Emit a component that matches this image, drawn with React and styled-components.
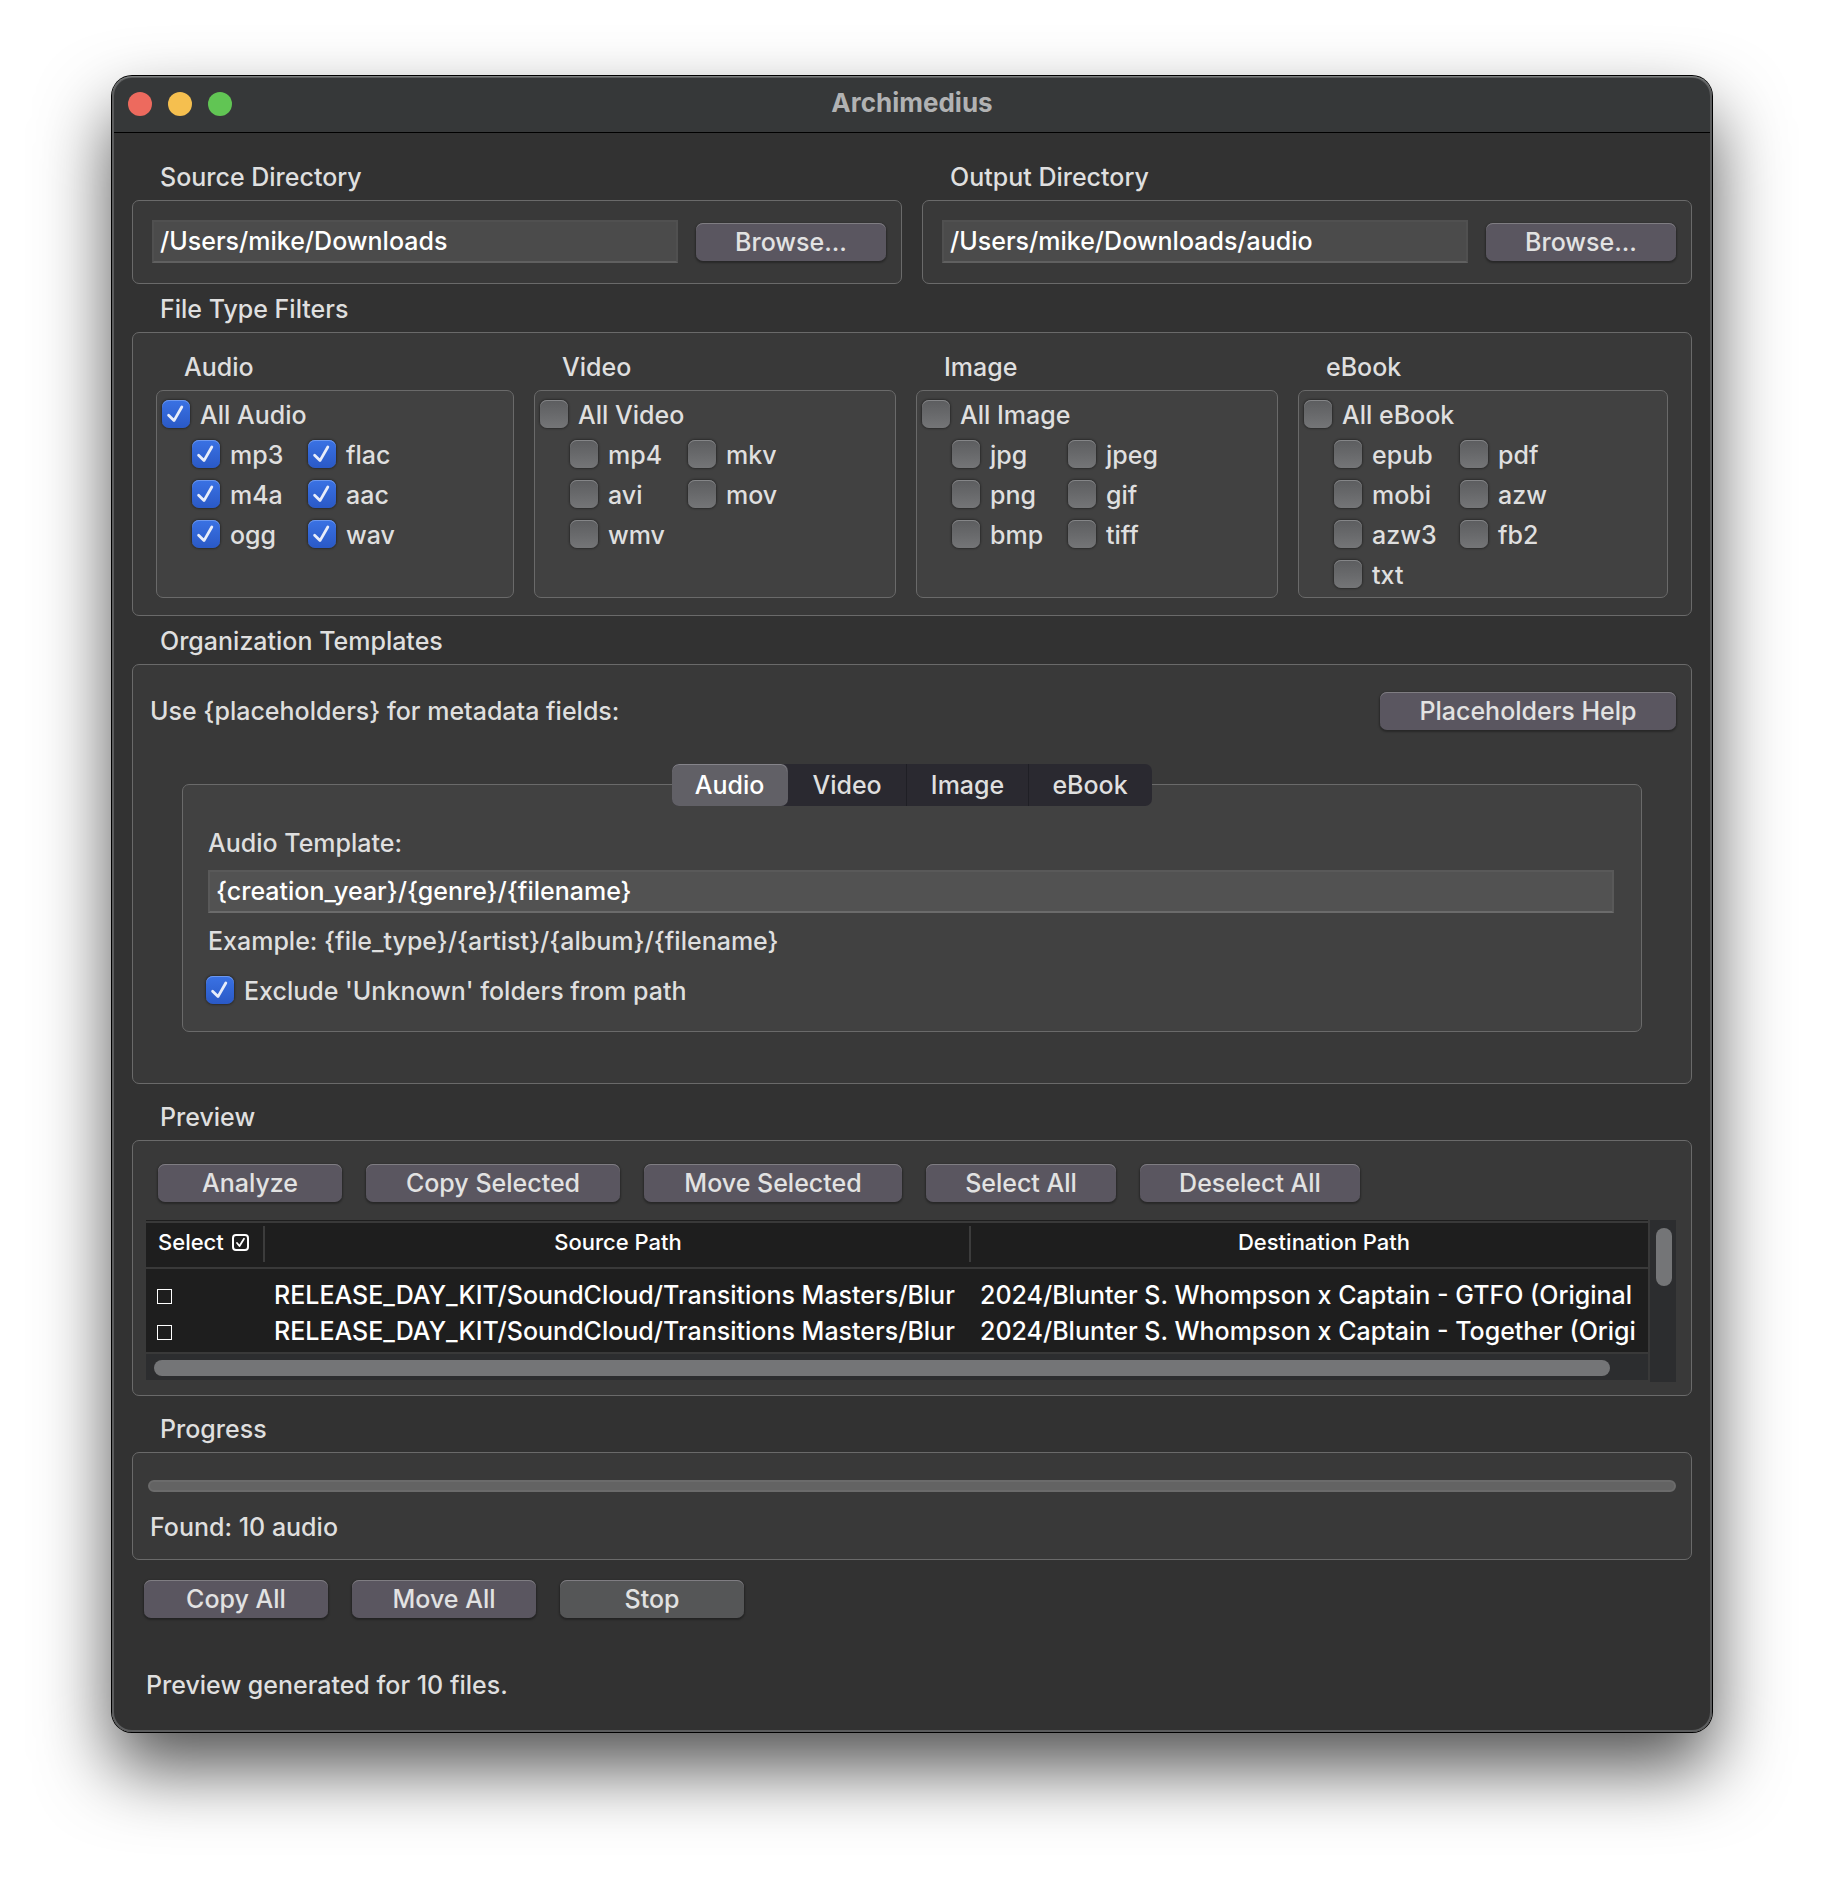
import React, { useId, useState } from "react";
import styled, { createGlobalStyle } from "styled-components";

const GlobalStyle = createGlobalStyle`
  *, *::before, *::after { box-sizing: border-box; }
  body {
    margin: 0;
    background: #ffffff;
    color: #dfdfdf;
    font-family: Inter, "Liberation Sans", sans-serif;
    font-size: 25px;
    font-weight: 500;
    line-height: 30px;
  }
  h1, h2, h3, p { margin: 0; font-size: inherit; font-weight: inherit; }
  button, input { font: inherit; color: inherit; margin: 0; }
`;

const Page = styled.div`
  padding: 76px 112px 148px;
`;

const Window = styled.main`
  position: relative;
  border-radius: 20px;
  background: #323232;
  overflow: clip;
`;

const WindowShadow = styled.div`
  border-radius: 20px;
  box-shadow: 0 0 0 1px #000, 0 36px 72px rgba(0, 0, 0, 0.68);
`;

const WindowEdge = styled.div`
  position: absolute;
  inset: 0;
  border-radius: 20px;
  pointer-events: none;
  box-shadow: inset 0 1px 0 #7d8080, inset 0 0 0 2px #5c5d5e;
`;

const TitleBar = styled.header`
  display: grid;
  grid-template-columns: 1fr auto 1fr;
  align-items: center;
  height: 57px;
  padding: 0 16px;
  background: #363839;
  border-bottom: 1px solid #000;
`;

const Lights = styled.div`
  display: flex;
  gap: 16px;
`;

const Light = styled.button`
  width: 24px;
  height: 24px;
  padding: 0;
  border: 0;
  border-radius: 50%;
  background: ${(p) => p.$color};
`;

const Title = styled.h1`
  padding-bottom: 2px;
  color: #b1b2b3;
  font-size: 26px;
  font-weight: 700;
`;

const Body = styled.div`
  padding: 19px 20px 32px;
`;

const Columns = styled.div`
  display: grid;
  grid-template-columns: 1fr 1fr;
  gap: 20px;
`;

const Section = styled.section`
  min-width: 0;
  margin-top: ${(p) => (p.$spaced ? 8 : 0)}px;
`;

const GroupTitle = styled.h2`
  padding: 2px 28px 0;
  line-height: 46px;
`;

const DirectoryLabel = styled.label`
  display: block;
`;

const Group = styled.div`
  border: 1px solid #6a6a6a;
  border-radius: 7px;
  background: ${(p) => (p.$inner ? "#414141" : "#393939")};
  padding: ${(p) => p.$pad};
`;

const PathRow = styled.div`
  display: flex;
  align-items: center;
  gap: 18px;
`;

const TextField = styled.input`
  display: block;
  flex: 1;
  width: 100%;
  min-width: 0;
  height: 43px;
  padding: 0 6px 2px;
  border: 2px solid ${(p) => (p.$light ? "#595959" : "#505050")};
  border-bottom-color: ${(p) => (p.$light ? "#6b6b6b" : "#606060")};
  border-radius: 0;
  outline: 0;
  background: ${(p) => (p.$light ? "#525252" : "#4b4b4b")};
  color: #fff;
`;

const Button = styled.button`
  flex: none;
  width: ${(p) => p.$width}px;
  height: 38px;
  padding: 0;
  border: 0;
  border-radius: 7px;
  background: ${(p) => (p.$muted ? "#555657" : "#5a5660")};
  box-shadow: inset 0 1px 0 #7f7d82, 0 1px 2px 1px rgba(0, 0, 0, 0.3);
  color: #e2e2e2;
  line-height: 38px;
  white-space: nowrap;
`;

const FilterGrid = styled.div`
  display: grid;
  grid-template-columns: 358fr 362fr 362fr 370fr;
  gap: 20px;
`;

const FilterColumn = styled.section`
  display: flex;
  flex-direction: column;
  min-width: 0;

  & > ${Group} { flex: 1; }
`;

const TypeGrid = styled.div`
  display: grid;
  grid-template-columns: ${(p) => p.$first}px auto;
  justify-content: start;
  gap: 12px 0;
  margin-top: 12px;
  padding-left: 30px;
`;

const CheckLabel = styled.label`
  display: flex;
  align-items: center;
  gap: 10px;
  height: 28px;
  white-space: nowrap;
`;

const CheckText = styled.span`
  padding-top: 2px;
`;

const Tick = styled.span`
  position: relative;
  display: block;
  flex: none;
  width: 28px;
  height: 28px;

  svg {
    position: absolute;
    inset: 0;
    pointer-events: none;
  }
`;

const TickInput = styled.input`
  display: block;
  appearance: none;
  width: 28px;
  height: 28px;
  border-radius: 7px;
  background: linear-gradient(#5c5d5f, #747577);
  box-shadow: inset 0 1px 0 #858688, 0 0 2px 1px rgba(0, 0, 0, 0.35);

  &:checked {
    background: linear-gradient(#3a72e4, #2a59c6);
    box-shadow: inset 0 1px 0 #6c97ee, 0 0 2px 1px rgba(0, 0, 0, 0.35);
  }
`;

const HelpRow = styled.div`
  display: flex;
  align-items: center;
  justify-content: space-between;
`;

const TabArea = styled.div`
  margin: 34px 34px 0 32px;
`;

const Tabs = styled.div`
  position: relative;
  display: flex;
  width: 480px;
  height: 42px;
  margin: 0 auto;
  border-radius: 7px;
  background: #2a2930;
`;

const Tab = styled.button`
  flex: ${(p) => p.$grow};
  padding: 0;
  border: 0;
  border-right: 1px solid ${(p) => (p.$divider ? "#1f1f25" : "transparent")};
  border-radius: ${(p) => (p.$active ? "7px" : "0")};
  background: ${(p) => (p.$active ? "#616066" : "transparent")};
  box-shadow: ${(p) => (p.$active ? "inset 0 1px 0 #85848a" : "none")};
  color: ${(p) => (p.$active ? "#fff" : "#dfdfdf")};
`;

const TabPanel = styled(Group)`
  margin-top: -22px;
`;

const FieldLabel = styled.label`
  display: block;
  margin-bottom: 12px;
`;

const Example = styled.p`
  margin: 13px 0 20px;
`;

const Inset = styled.div`
  margin-left: -2px;
`;

const Toolbar = styled.div`
  display: flex;
  flex-wrap: wrap;
  gap: 24px;
  padding-left: 12px;
`;

const TableFrame = styled.div`
  display: grid;
  grid-template-columns: minmax(0, 1fr) 26px;
  grid-template-rows: auto 28px;
  column-gap: 2px;
  margin-top: 18px;
`;

const TableView = styled.div`
  overflow: hidden;
  padding-bottom: 3px;
  border-bottom: 2px solid #393939;
  background: #1e1e1e;
`;

const Table = styled.table`
  width: calc(100% + 29px);
  table-layout: fixed;
  border-collapse: separate;
  border-spacing: 0;
  border-top: 1px solid #1e1e1e;
  color: #fff;

  tbody::before {
    content: "";
    display: table-row;
    height: 8px;
  }
`;

const HeadCell = styled.th`
  width: ${(p) => (p.$narrow ? "119px" : "auto")};
  height: 48px;
  padding: 0 ${(p) => (p.$narrow ? "0 6px 12px" : "6px 6px")};
  border-top: 2px solid #393939;
  border-bottom: 2px solid #393939;
  background: linear-gradient(#3c3c3c, #3c3c3c) right 3px / 2px 36px no-repeat;
  font-size: 22px;
  font-weight: 500;
  line-height: 26px;
`;

const SelectHead = styled.label`
  display: flex;
  align-items: center;
  gap: 8px;
`;

const Cell = styled.td`
  height: 36px;
  padding: 0 7px 0 ${(p) => (p.$tick ? 11 : 9)}px;
  line-height: 36px;
`;

const Clip = styled.div`
  overflow: hidden;
  white-space: nowrap;
`;

const MiniTick = styled.span`
  position: relative;
  display: block;
  width: ${(p) => p.$size}px;
  height: ${(p) => p.$size}px;

  input {
    display: block;
    appearance: none;
    width: 100%;
    height: 100%;
    border: ${(p) => p.$stroke}px solid #fff;
    border-radius: ${(p) => p.$radius}px;
  }

  svg {
    position: absolute;
    inset: 0;
    pointer-events: none;
  }
`;

const RowTick = styled.div`
  display: flex;
  align-items: center;
  height: 36px;
  padding-top: 3px;
`;

const HScroll = styled.div`
  height: 26px;
  padding: 6px 38px 4px 8px;
  background: #2c2d2f;
`;

const VScroll = styled.div`
  grid-column: 2;
  grid-row: 1 / span 2;
  padding: 8px 4px 0 6px;
  background: #2c2d2f;
`;

const Thumb = styled.div`
  height: ${(p) => p.$height}px;
  border-radius: 8px;
  background: #747577;
`;

const ProgressBar = styled.progress`
  display: block;
  width: 100%;
  height: 12px;
  appearance: none;
  border: 0;

  &::-webkit-progress-bar {
    border: 2px solid #6b6b6b;
    border-radius: 6px;
    background: #636363;
  }
  &::-webkit-progress-value {
    background: #3a72e4;
  }
`;

const ProgressText = styled.p`
  margin-top: 20px;
  padding-left: 2px;
`;

const Actions = styled.div`
  display: flex;
  gap: 24px;
  margin-top: 20px;
  padding-left: 12px;
`;

const Status = styled.p`
  margin-top: 52px;
  padding-left: 14px;
`;

const FILTERS = [
  { name: "Audio", on: true, first: 116, types: ["mp3", "flac", "m4a", "aac", "ogg", "wav"] },
  { name: "Video", on: false, first: 118, types: ["mp4", "mkv", "avi", "mov", "wmv"] },
  { name: "Image", on: false, first: 116, types: ["jpg", "jpeg", "png", "gif", "bmp", "tiff"] },
  { name: "eBook", on: false, first: 126, types: ["epub", "pdf", "mobi", "azw", "azw3", "fb2", "txt"] },
];

const TABS = [
  { name: "Audio", grow: 116 },
  { name: "Video", grow: 119 },
  { name: "Image", grow: 122 },
  { name: "eBook", grow: 123 },
];

const ROWS = [
  {
    source: "RELEASE_DAY_KIT/SoundCloud/Transitions Masters/Blur",
    dest: "2024/Blunter S. Whompson x Captain - GTFO (Original",
  },
  {
    source: "RELEASE_DAY_KIT/SoundCloud/Transitions Masters/Blur",
    dest: "2024/Blunter S. Whompson x Captain - Together (Origi",
  },
];

function Check({ label, initial }) {
  const [on, setOn] = useState(initial);
  return (
    <CheckLabel>
      <Tick>
        <TickInput type="checkbox" checked={on} onChange={() => setOn(!on)} />
        {on && (
          <svg width="28" height="28" viewBox="0 0 28 28" fill="none" aria-hidden="true">
            <path d="M6.6 15.2 L12 20.6 L19.8 7" stroke="#e8edfa" strokeWidth="2.8" strokeLinecap="round" strokeLinejoin="round" />
          </svg>
        )}
      </Tick>
      <CheckText>{label}</CheckText>
    </CheckLabel>
  );
}

function DirectorySection({ title, path }) {
  const id = useId();
  const [value, setValue] = useState(path);
  return (
    <Section>
      <GroupTitle>
        <DirectoryLabel htmlFor={id}>{title}</DirectoryLabel>
      </GroupTitle>
      <Group $pad="19px 15px 20px 19px">
        <PathRow>
          <TextField id={id} value={value} onChange={(e) => setValue(e.target.value)} />
          <Button $width={190}>Browse...</Button>
        </PathRow>
      </Group>
    </Section>
  );
}

export default function App() {
  const [tab, setTab] = useState("Audio");
  const [template, setTemplate] = useState("{creation_year}/{genre}/{filename}");

  return (
    <>
      <GlobalStyle />
      <Page>
        <WindowShadow>
          <Window>
            <TitleBar>
              <Lights>
                <Light $color="#ed6a5e" aria-label="Close" />
                <Light $color="#f5bf4f" aria-label="Minimize" />
                <Light $color="#61c554" aria-label="Zoom" />
              </Lights>
              <Title>Archimedius</Title>
            </TitleBar>

            <Body>
              <Columns>
                <DirectorySection title="Source Directory" path="/Users/mike/Downloads" />
                <DirectorySection title="Output Directory" path="/Users/mike/Downloads/audio" />
              </Columns>

              <Section>
                <GroupTitle>File Type Filters</GroupTitle>
                <Group $pad="9px 23px 17px">
                  <FilterGrid>
                    {FILTERS.map((f) => (
                      <FilterColumn key={f.name}>
                        <GroupTitle as="h3">{f.name}</GroupTitle>
                        <Group $inner $pad="9px 5px">
                          <Check label={`All ${f.name}`} initial={f.on} />
                          <TypeGrid $first={f.first}>
                            {f.types.map((t) => (
                              <Check key={t} label={t} initial={f.on} />
                            ))}
                          </TypeGrid>
                        </Group>
                      </FilterColumn>
                    ))}
                  </FilterGrid>
                </Group>
              </Section>

              <Section>
                <GroupTitle>Organization Templates</GroupTitle>
                <Group $pad="27px 15px 51px 17px">
                  <HelpRow>
                    <p>Use {"{placeholders}"} for metadata fields:</p>
                    <Button $width={296}>Placeholders Help</Button>
                  </HelpRow>
                  <TabArea>
                    <Tabs role="tablist">
                      {TABS.map((t, i) => (
                        <Tab
                          key={t.name}
                          role="tab"
                          aria-selected={tab === t.name}
                          $active={tab === t.name}
                          $divider={tab !== t.name && i < TABS.length - 1}
                          $grow={t.grow}
                          onClick={() => setTab(t.name)}
                        >
                          {t.name}
                        </Tab>
                      ))}
                    </Tabs>
                    <TabPanel $inner $pad="43px 27px 27px 25px">
                      <FieldLabel htmlFor="template">Audio Template:</FieldLabel>
                      <TextField
                        id="template"
                        $light
                        value={template}
                        onChange={(e) => setTemplate(e.target.value)}
                      />
                      <Example>Example: {"{file_type}/{artist}/{album}/{filename}"}</Example>
                      <Inset>
                        <Check label="Exclude 'Unknown' folders from path" initial />
                      </Inset>
                    </TabPanel>
                  </TabArea>
                </Group>
              </Section>

              <Section $spaced>
                <GroupTitle>Preview</GroupTitle>
                <Group $pad="23px 15px 13px 13px">
                  <Toolbar>
                    <Button $width={184}>Analyze</Button>
                    <Button $width={254}>Copy Selected</Button>
                    <Button $width={258}>Move Selected</Button>
                    <Button $width={190}>Select All</Button>
                    <Button $width={220}>Deselect All</Button>
                  </Toolbar>
                  <TableFrame>
                    <TableView>
                      <Table>
                        <thead>
                          <tr>
                            <HeadCell $narrow>
                              <SelectHead>
                                Select
                                <MiniTick $size={17} $radius={4} $stroke={2}>
                                  <input type="checkbox" defaultChecked />
                                  <svg width="17" height="17" viewBox="0 0 17 17" fill="none" aria-hidden="true">
                                    <path d="M5 9 L7.5 12 L12 4.8" stroke="#fff" strokeWidth="1.8" strokeLinecap="round" strokeLinejoin="round" />
                                  </svg>
                                </MiniTick>
                              </SelectHead>
                            </HeadCell>
                            <HeadCell>Source Path</HeadCell>
                            <HeadCell>Destination Path</HeadCell>
                          </tr>
                        </thead>
                        <tbody>
                          {ROWS.map((r) => (
                            <tr key={r.dest}>
                              <Cell $tick>
                                <RowTick>
                                  <MiniTick $size={15} $radius={0} $stroke={1}>
                                    <input type="checkbox" aria-label={r.dest} />
                                  </MiniTick>
                                </RowTick>
                              </Cell>
                              <Cell><Clip>{r.source}</Clip></Cell>
                              <Cell><Clip>{r.dest}</Clip></Cell>
                            </tr>
                          ))}
                        </tbody>
                      </Table>
                    </TableView>
                    <HScroll><Thumb $height={16} /></HScroll>
                    <VScroll><Thumb $height={58} /></VScroll>
                  </TableFrame>
                </Group>
              </Section>

              <Section $spaced>
                <GroupTitle>Progress</GroupTitle>
                <Group $pad="27px 15px 17px">
                  <ProgressBar value={0} max={100} aria-label="Progress" />
                  <ProgressText>Found: 10 audio</ProgressText>
                </Group>
              </Section>

              <Actions>
                <Button $width={184}>Copy All</Button>
                <Button $width={184}>Move All</Button>
                <Button $width={184} $muted>Stop</Button>
              </Actions>
              <Status role="status">Preview generated for 10 files.</Status>
            </Body>
            <WindowEdge />
          </Window>
        </WindowShadow>
      </Page>
    </>
  );
}
